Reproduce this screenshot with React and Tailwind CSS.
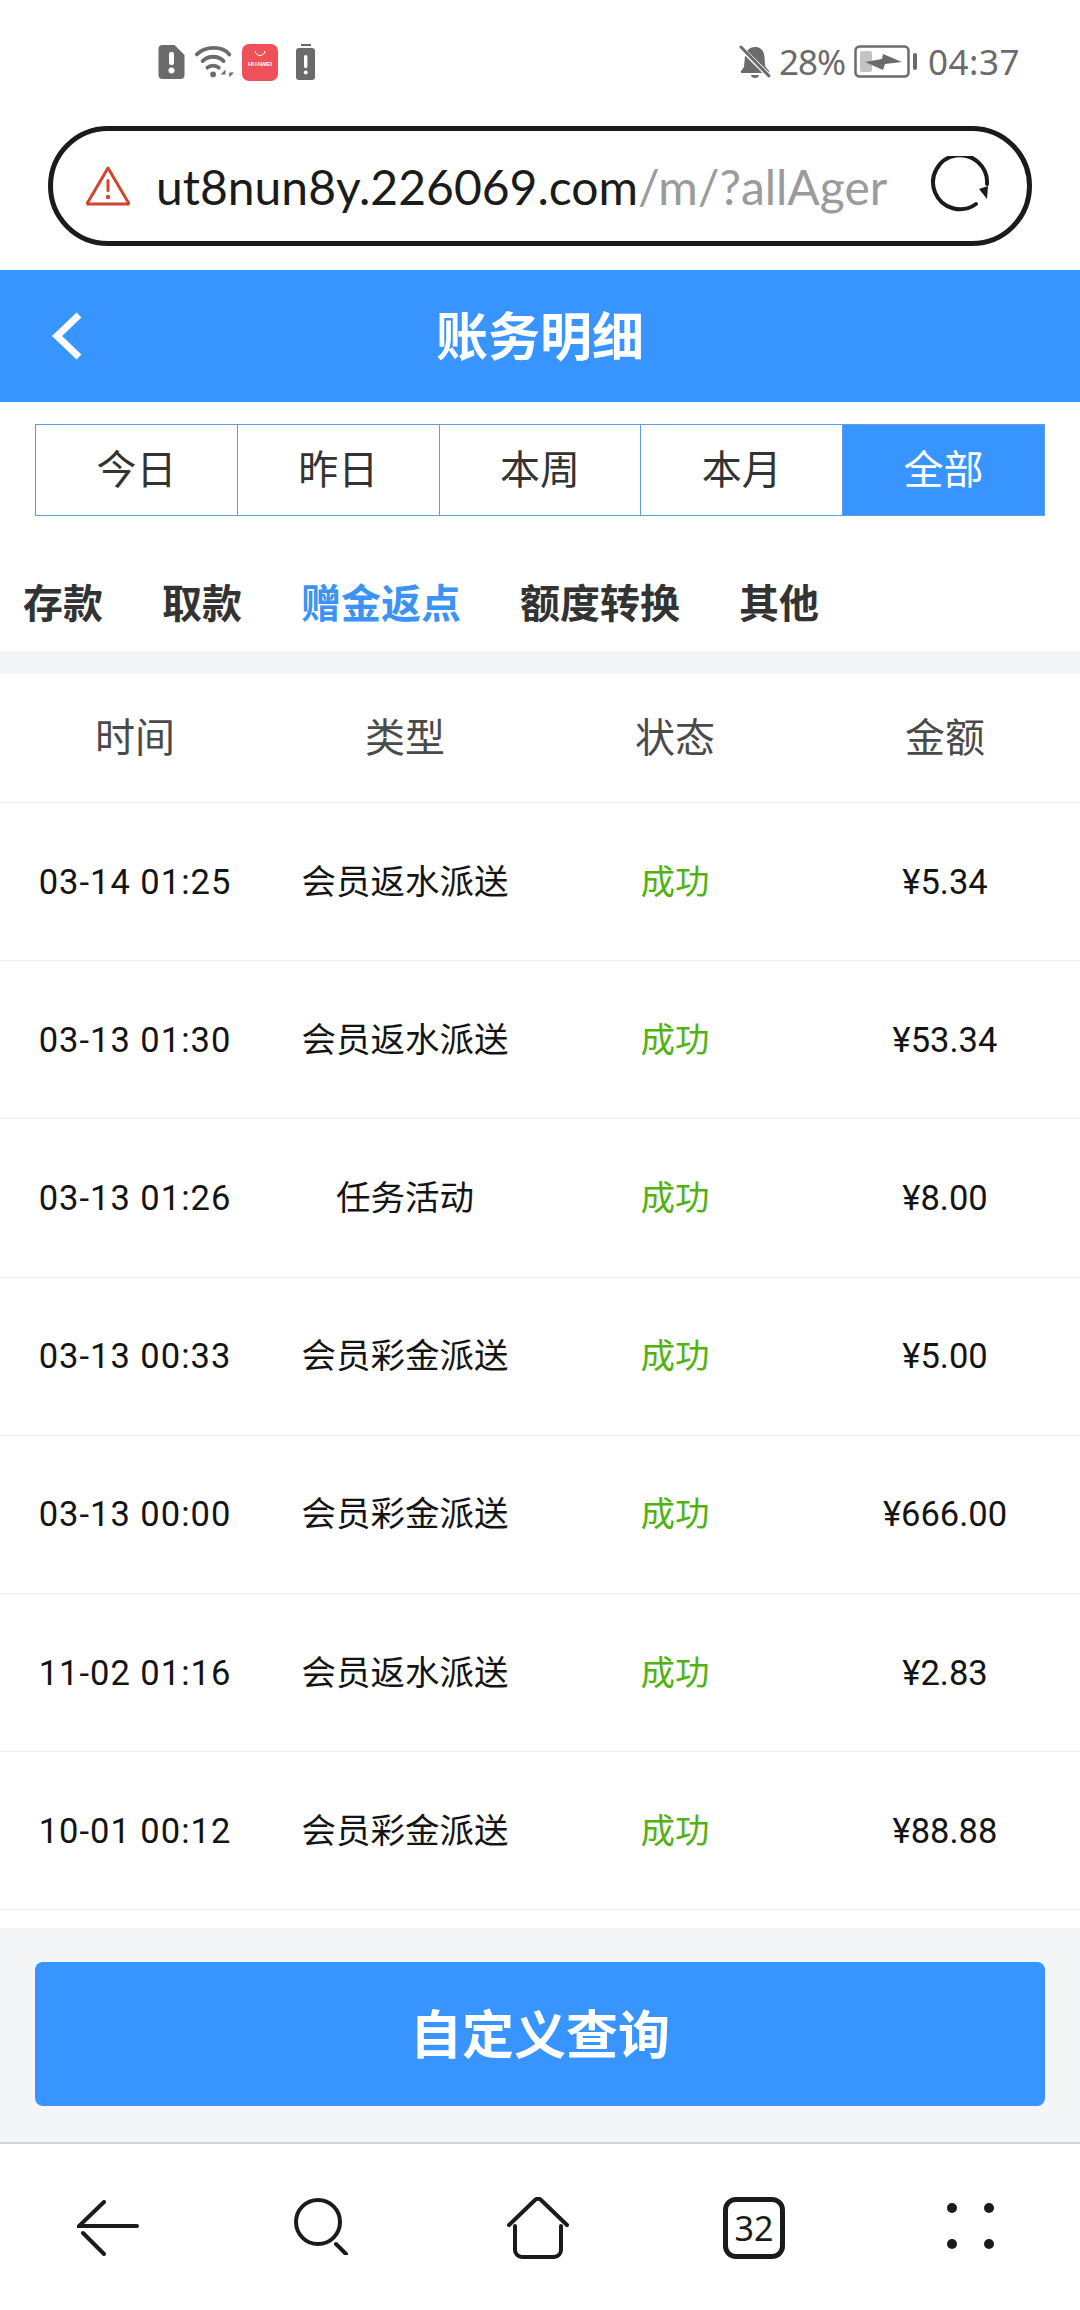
const cjk = { fontFamily: "'Noto Sans', 'Noto Sans CJK SC', sans-serif" };
const digits = { fontFamily: "Roboto, 'Noto Sans CJK SC', sans-serif" };

const ranges = ['今日', '昨日', '本周', '本月', '全部'];
const kinds = ['存款', '取款', '赠金返点', '额度转换', '其他'];
const columns = ['时间', '类型', '状态', '金额'];
const rows = [
  { time: '03-14 01:25', type: '会员返水派送', amount: '¥5.34' },
  { time: '03-13 01:30', type: '会员返水派送', amount: '¥53.34' },
  { time: '03-13 01:26', type: '任务活动', amount: '¥8.00' },
  { time: '03-13 00:33', type: '会员彩金派送', amount: '¥5.00' },
  { time: '03-13 00:00', type: '会员彩金派送', amount: '¥666.00' },
  { time: '11-02 01:16', type: '会员返水派送', amount: '¥2.83' },
  { time: '10-01 00:12', type: '会员彩金派送', amount: '¥88.88' },
];

function StatusBar() {
  return (
    <div className="h-[126px] flex items-start justify-between pt-[44px] pl-[158px] pr-[60px] text-[#6b6b6b]">
      <div className="flex items-center h-[36px]">
        <svg width="27" height="34" viewBox="0 0 26 34" fill="#6b6b6b">
          <path d="M4 0h12l10 10v20a4 4 0 0 1-4 4H4a4 4 0 0 1-4-4V4a4 4 0 0 1 4-4z" />
          <rect x="10.5" y="7" width="5" height="13" rx="2" fill="#fff" />
          <circle cx="13" cy="25.5" r="3" fill="#fff" />
        </svg>
        <svg className="ml-[10px]" width="40" height="34" viewBox="0 0 42 34" fill="none" stroke="#6b6b6b" strokeWidth="4" strokeLinecap="round">
          <path d="M2 9C11 0 29 0 36 9" />
          <path d="M8 16c6-6 16-6 22 0" />
          <path d="M13 23c3-3 9-3 12 0" />
          <circle cx="19" cy="30" r="3" fill="#6b6b6b" stroke="none" />
          <path d="M32 25l-5 5h5zM36 33l5-5h-5z" fill="#6b6b6b" stroke="none" />
        </svg>
        <div className="ml-[7px] w-[36px] h-[37px] rounded-[7px] bg-[#ee5258] flex flex-col items-center">
          <svg className="mt-[7px]" width="12" height="6" viewBox="0 0 12 6" fill="none" stroke="#fff" strokeWidth="1"><path d="M1 0c1 6 9 6 10 0" /></svg>
          <span className="text-[6px] leading-[8px] mt-[3px] font-bold text-white" style={{ fontFamily: "'Liberation Sans', sans-serif" }}>HUAWEI</span>
        </div>
        <svg className="ml-[18px]" width="20" height="36" viewBox="0 0 20 36" fill="#6b6b6b">
          <rect x="5" y="0" width="10" height="2" />
          <rect x="0" y="4" width="19" height="32" rx="3" />
          <rect x="8" y="11" width="3.4" height="13" rx="1.5" fill="#fff" />
          <circle cx="9.7" cy="28.5" r="2" fill="#fff" />
        </svg>
      </div>
      <div className="flex items-center h-[36px] text-[35px] leading-[36px]" style={{ fontFamily: "'Noto Sans', sans-serif" }}>
        <svg width="32" height="34" viewBox="0 0 32 34" fill="#6b6b6b">
          <path d="M16 2c6 0 9 4 9.500 10l.5 9 4 5v2H2v-2l3-4 1-11C7 6 10 2 16 2z" />
          <path d="M12 30h8c0 4-8 4-8 0z" />
          <path d="M1 2l29 29" stroke="#fff" strokeWidth="5" />
          <path d="M2 2l28 29" stroke="#6b6b6b" strokeWidth="3" strokeLinecap="round" />
        </svg>
        <span className="ml-[8px] tracking-[-1px]">28%</span>
        <svg className="ml-[9px]" width="64" height="34" viewBox="0 0 64 34" fill="none">
          <rect x="1.500" y="1.500" width="53" height="30" rx="4" stroke="#6b6b6b" strokeWidth="2.500" />
          <rect x="6" y="6" width="12" height="21" rx="2" fill="#c4c4c4" />
          <path d="M11 17l17-3 1-5 19 8-17 2-2 6z" fill="#6b6b6b" />
          <rect x="59" y="8" width="4" height="17" rx="2" fill="#6b6b6b" />
        </svg>
        <span className="ml-[10px] tracking-[0.5px]">04:37</span>
      </div>
    </div>
  );
}

function UrlBar() {
  return (
    <div className="mx-[48px] w-[984px] h-[120px] rounded-full border-[5px] border-[#1b1b1b] flex items-center pl-[33px] pr-[36px]">
      <svg width="44" height="40" viewBox="0 0 44 40" fill="none" stroke="#d2452f" strokeWidth="3" strokeLinejoin="round">
        <path d="M22 2L42 36a1 1 0 0 1-1 2H3a1 1 0 0 1-1-2z" />
        <rect x="20.500" y="13" width="3" height="13" rx="1.500" fill="#d2452f" stroke="none" />
        <circle cx="22" cy="31" r="2.200" fill="#d2452f" stroke="none" />
      </svg>
      <div className="ml-[26px] pt-[2px] flex-1 whitespace-nowrap overflow-hidden text-[48px] leading-[56px] text-[#1b1b1b]" style={{ fontFamily: "'Lato', sans-serif" }}>
        ut8nun8y.226069.com<span className="text-[#9b9b9b]">/m/?allAger</span>
      </div>
      <svg className="ml-[38px] mr-[1px]" width="60" height="60" viewBox="0 0 60 60" fill="none" stroke="#1b1b1b" strokeWidth="4" strokeLinecap="round">
        <path d="M46 48A27 27 0 1 1 57 28" />
        <path d="M49 33l9-3-1 13z" fill="#1b1b1b" stroke="none" />
      </svg>
    </div>
  );
}

function Toolbar() {
  return (
    <div className="h-[168px] bg-white border-t-2 border-[#d2d2d2] flex items-start pt-[53px] pl-[77px]">
      <svg className="mt-[3px]" width="62" height="56" viewBox="0 0 62 56" fill="none" stroke="#1b1b1b" strokeWidth="4" strokeLinecap="round">
        <path d="M27 2L2 26h58" />
        <path d="M6 33l21 21" />
      </svg>
      <svg className="ml-[154px]" width="58" height="58" viewBox="0 0 58 58" fill="none" stroke="#1b1b1b" strokeWidth="4" strokeLinecap="round">
        <circle cx="25" cy="25" r="22" />
        <path d="M43 47l10 10" />
      </svg>
      <svg className="ml-[155px]" width="64" height="62" viewBox="0 0 64 62" fill="none" stroke="#1b1b1b" strokeWidth="4" strokeLinecap="round" strokeLinejoin="round">
        <path d="M3 28L29 3a4 4 0 0 1 6 0l26 25" />
        <path d="M9 29v24a7 7 0 0 0 7 7h32a7 7 0 0 0 7-7V29" />
      </svg>
      <div className="ml-[153px] w-[62px] h-[62px] rounded-[13px] border-[5px] border-[#1b1b1b] flex items-center justify-center text-[34px] leading-none text-[#1b1b1b]" style={{ fontFamily: "'Noto Sans', sans-serif" }}>32</div>
      <div className="ml-[162px] w-[47px] h-[46px] mt-[6px] grid grid-cols-2 content-between justify-between">
        <i className="w-[10px] h-[10px] rounded-full bg-[#1b1b1b]" />
        <i className="w-[10px] h-[10px] rounded-full bg-[#1b1b1b] justify-self-end" />
        <i className="w-[10px] h-[10px] rounded-full bg-[#1b1b1b]" />
        <i className="w-[10px] h-[10px] rounded-full bg-[#1b1b1b] justify-self-end" />
      </div>
    </div>
  );
}

export default function App() {
  return (
    <div className="w-[1080px] h-[2310px] bg-white flex flex-col overflow-hidden" style={cjk}>
      <StatusBar />
      <UrlBar />
      <div className="h-[24px]" />

      {/* header */}
      <header className="h-[132px] bg-[#3894ff] flex items-center justify-center relative">
        <svg className="absolute left-[50px] top-[42px]" width="32" height="48" viewBox="0 0 32 48" fill="none" stroke="#fff" strokeWidth="7">
          <path d="M29 3L7 24l22 21" />
        </svg>
        <h1 className="text-[52px] font-bold text-white leading-none">账务明细</h1>
      </header>

      {/* date range */}
      <div className="mt-[22px] mx-[35px] h-[92px] flex border border-[#5a9fe0]">
        {ranges.map((r, i) => (
          <div key={r} className={`flex-1 flex items-center justify-center pb-[3px] text-[40px] ${i === 4 ? 'bg-[#3894ff] text-white' : 'text-[#333]'} ${i > 0 ? 'border-l border-[#5a9fe0]' : ''}`}>
            {r}
          </div>
        ))}
      </div>

      {/* record kinds */}
      <div className="h-[135px] pl-[23px] pt-[38px] flex items-center gap-[59px] text-[40px] font-bold text-[#333]">
        {kinds.map((k, i) => (
          <span key={k} className={i === 2 ? 'text-[#3b93f3]' : ''}>{k}</span>
        ))}
      </div>
      <div className="h-[23px] bg-[#f4f5f7]" />

      {/* table */}
      <div className="grid grid-cols-4 h-[129px] pb-[3px] border-b border-[#ececec] text-[40px] text-[#4a4a4a]">
        {columns.map((c) => (
          <div key={c} className="flex items-center justify-center">{c}</div>
        ))}
      </div>
      {rows.map((row) => (
        <div key={row.time} className="grid grid-cols-4 h-[158.200px] pt-[2px] border-b border-[#ececec] text-[34.500px] text-[#141414]" style={digits}>
          <div className="flex items-center justify-center tracking-[1px]">{row.time}</div>
          <div className="flex items-center justify-center">{row.type}</div>
          <div className="flex items-center justify-center text-[#52b30f]">成功</div>
          <div className="flex items-center justify-center">{row.amount}</div>
        </div>
      ))}
      <div className="h-[18px]" />

      {/* custom query */}
      <div className="flex-1 bg-[#f4f5f7] px-[35px] flex items-start pt-[34px]">
        <button className="w-full h-[144px] rounded-[8px] bg-[#3894ff] text-white text-[52px] font-bold">自定义查询</button>
      </div>

      <Toolbar />
    </div>
  );
}
